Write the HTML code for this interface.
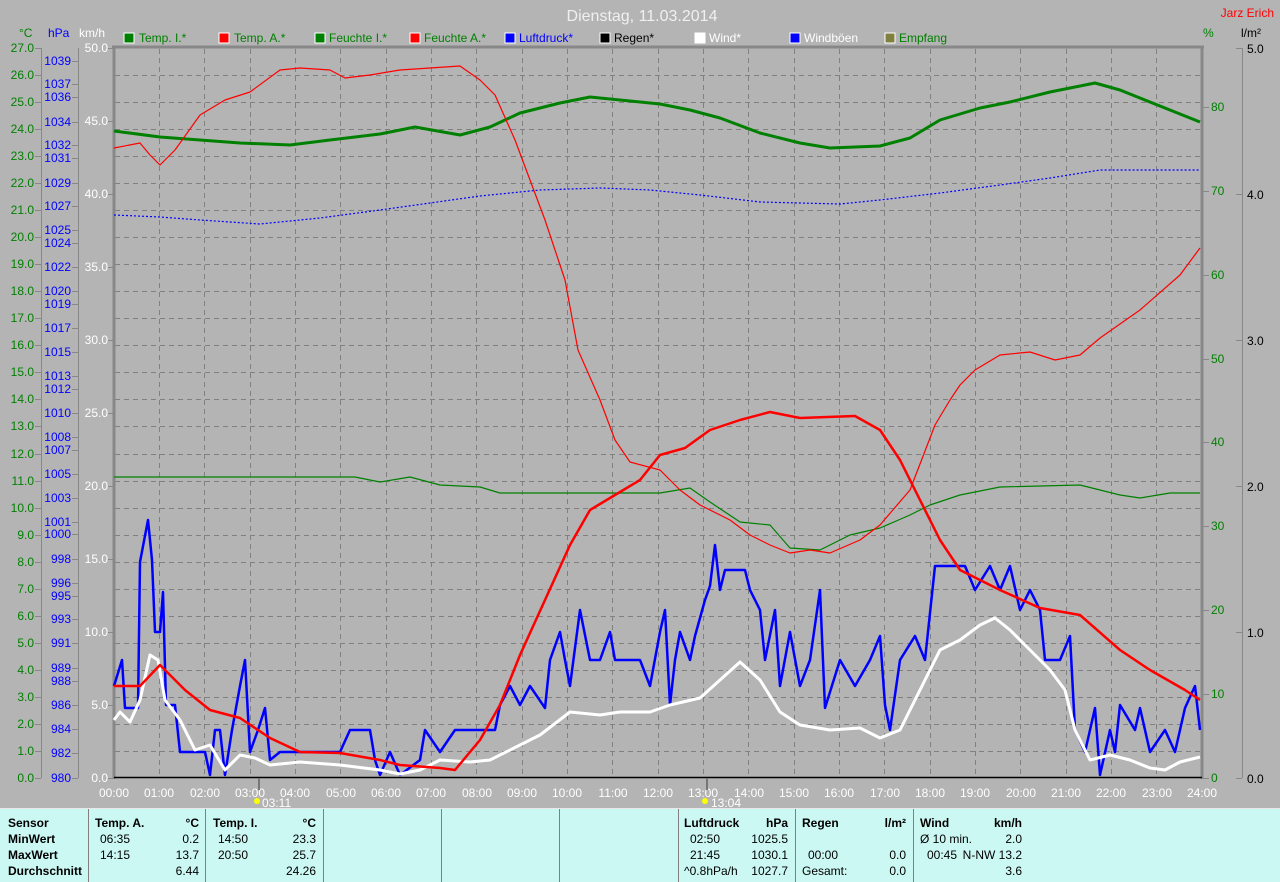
<!DOCTYPE html>
<html><head><meta charset="utf-8"><style>
html,body{margin:0;padding:0;background:#b4b4b4;}
body{width:1280px;height:881px;overflow:hidden;position:relative;font-family:"Liberation Sans",sans-serif;}
svg{position:absolute;left:0;top:0}
.tbl{position:absolute;left:0;top:808px;width:1280px;height:73px;background:#ccf8f4;border-top:1px solid #e8e8e8;font-size:12px;color:#000}
.tbl div{position:absolute;white-space:nowrap}
.b{font-weight:bold}
.sep{position:absolute;top:0;width:1px;height:73px;background:#808080}
</style></head><body>
<svg width="1280" height="808" xmlns="http://www.w3.org/2000/svg" font-family="Liberation Sans, sans-serif">
<text x="642" y="21" fill="#f0f0f0" font-size="16" text-anchor="middle">Dienstag, 11.03.2014</text>
<text x="1274" y="17" fill="#ff0000" font-size="12" text-anchor="end">Jarz Erich</text>
<g font-size="12">
<text x="19" y="37" fill="#008000">°C</text>
<text x="48" y="37" fill="#0000ff">hPa</text>
<text x="79" y="37" fill="#fff">km/h</text>
<text x="1203" y="37" fill="#008000">%</text>
<text x="1241" y="37" fill="#000">l/m²</text>
</g>
<g font-size="12">
<rect x="124" y="33" width="10" height="10" fill="#008000" stroke="#fff"/><text x="139" y="42" fill="#008000">Temp. I.*</text>
<rect x="219" y="33" width="10" height="10" fill="#ff0000" stroke="#fff"/><text x="234" y="42" fill="#008000">Temp. A.*</text>
<rect x="315" y="33" width="10" height="10" fill="#008000" stroke="#fff"/><text x="329" y="42" fill="#008000">Feuchte I.*</text>
<rect x="410" y="33" width="10" height="10" fill="#ff0000" stroke="#fff"/><text x="424" y="42" fill="#008000">Feuchte A.*</text>
<rect x="505" y="33" width="10" height="10" fill="#0000ff" stroke="#fff"/><text x="519" y="42" fill="#0000ff">Luftdruck*</text>
<rect x="600" y="33" width="10" height="10" fill="#000" stroke="#fff"/><text x="614" y="42" fill="#000">Regen*</text>
<rect x="695" y="33" width="10" height="10" fill="#fff" stroke="#fff"/><text x="709" y="42" fill="#fff">Wind*</text>
<rect x="790" y="33" width="10" height="10" fill="#0000ff" stroke="#fff"/><text x="804" y="42" fill="#fff">Windböen</text>
<rect x="885" y="33" width="10" height="10" fill="#808040" stroke="#fff"/><text x="899" y="42" fill="#008000">Empfang</text>
</g>
<line x1="112" y1="47" x2="1204" y2="47" stroke="#888" stroke-width="3"/>
<path stroke="#808080" stroke-width="1" stroke-dasharray="5,4" fill="none" d="M115 751.5H1200M115 724.5H1200M115 697.5H1200M115 670.5H1200M115 643.5H1200M115 616.5H1200M115 589.5H1200M115 562.5H1200M115 535.5H1200M115 508.5H1200M115 481.5H1200M115 454.5H1200M115 426.5H1200M115 399.5H1200M115 372.5H1200M115 345.5H1200M115 318.5H1200M115 291.5H1200M115 264.5H1200M115 237.5H1200M115 210.5H1200M115 183.5H1200M115 156.5H1200M115 129.5H1200M115 102.5H1200M115 75.5H1200
M159.5 49V777M204.5 49V777M250.5 49V777M295.5 49V777M340.5 49V777M386.5 49V777M431.5 49V777M476.5 49V777M522.5 49V777M567.5 49V777M612.5 49V777M658.5 49V777M703.5 49V777M748.5 49V777M794.5 49V777M839.5 49V777M884.5 49V777M930.5 49V777M975.5 49V777M1020.5 49V777M1066.5 49V777M1111.5 49V777M1156.5 49V777"/>
<line x1="114" y1="46" x2="114" y2="779" stroke="#888" stroke-width="3"/>
<line x1="1202" y1="46" x2="1202" y2="779" stroke="#888" stroke-width="3"/>
<line x1="114" y1="777.5" x2="1202" y2="777.5" stroke="#000" stroke-width="1.5"/>
<line x1="41.5" y1="48" x2="41.5" y2="778" stroke="#888"/>
<line x1="78.5" y1="48" x2="78.5" y2="778" stroke="#888"/>
<line x1="1242.5" y1="48" x2="1242.5" y2="778" stroke="#888"/>
<path stroke="#888" fill="none" d="M35 778.5h6M35 751.5h6M35 724.5h6M35 697.5h6M35 670.5h6M35 643.5h6M35 616.5h6M35 589.5h6M35 562.5h6M35 535.5h6M35 508.5h6M35 481.5h6M35 454.5h6M35 426.5h6M35 399.5h6M35 372.5h6M35 345.5h6M35 318.5h6M35 291.5h6M35 264.5h6M35 237.5h6M35 210.5h6M35 183.5h6M35 156.5h6M35 129.5h6M35 102.5h6M35 75.5h6M35 48.5h6
M72 61.5h6M72 84.5h6M72 97.5h6M72 122.5h6M72 145.5h6M72 158.5h6M72 183.5h6M72 206.5h6M72 230.5h6M72 243.5h6M72 267.5h6M72 291.5h6M72 304.5h6M72 328.5h6M72 352.5h6M72 376.5h6M72 389.5h6M72 413.5h6M72 437.5h6M72 450.5h6M72 474.5h6M72 498.5h6M72 522.5h6M72 534.5h6M72 559.5h6M72 583.5h6M72 596.5h6M72 619.5h6M72 643.5h6M72 668.5h6M72 681.5h6M72 705.5h6M72 729.5h6M72 753.5h6M72 778.5h6
M108 778.5h6M108 705.5h6M108 632.5h6M108 559.5h6M108 486.5h6M108 413.5h6M108 340.5h6M108 267.5h6M108 194.5h6M108 121.5h6M108 48.5h6
M1203 778.5h6M1203 694.5h6M1203 610.5h6M1203 526.5h6M1203 442.5h6M1203 359.5h6M1203 275.5h6M1203 191.5h6M1203 107.5h6
M1236 778.5h6M1236 632.5h6M1236 486.5h6M1236 340.5h6M1236 194.5h6M1236 48.5h6"/>
<g font-size="12" fill="#008000" text-anchor="end">
<text x="34" y="782">0.0</text><text x="34" y="755">1.0</text><text x="34" y="728">2.0</text><text x="34" y="701">3.0</text><text x="34" y="674">4.0</text><text x="34" y="647">5.0</text><text x="34" y="620">6.0</text><text x="34" y="593">7.0</text><text x="34" y="566">8.0</text><text x="34" y="539">9.0</text><text x="34" y="512">10.0</text><text x="34" y="485">11.0</text><text x="34" y="458">12.0</text><text x="34" y="430">13.0</text><text x="34" y="403">14.0</text><text x="34" y="376">15.0</text><text x="34" y="349">16.0</text><text x="34" y="322">17.0</text><text x="34" y="295">18.0</text><text x="34" y="268">19.0</text><text x="34" y="241">20.0</text><text x="34" y="214">21.0</text><text x="34" y="187">22.0</text><text x="34" y="160">23.0</text><text x="34" y="133">24.0</text><text x="34" y="106">25.0</text><text x="34" y="79">26.0</text><text x="34" y="52">27.0</text>
</g>
<g font-size="12" fill="#0000ff" text-anchor="end">
<text x="71" y="65">1039</text><text x="71" y="88">1037</text><text x="71" y="101">1036</text><text x="71" y="126">1034</text><text x="71" y="149">1032</text><text x="71" y="162">1031</text><text x="71" y="187">1029</text><text x="71" y="210">1027</text><text x="71" y="234">1025</text><text x="71" y="247">1024</text><text x="71" y="271">1022</text><text x="71" y="295">1020</text><text x="71" y="308">1019</text><text x="71" y="332">1017</text><text x="71" y="356">1015</text><text x="71" y="380">1013</text><text x="71" y="393">1012</text><text x="71" y="417">1010</text><text x="71" y="441">1008</text><text x="71" y="454">1007</text><text x="71" y="478">1005</text><text x="71" y="502">1003</text><text x="71" y="526">1001</text><text x="71" y="538">1000</text><text x="71" y="563">998</text><text x="71" y="587">996</text><text x="71" y="600">995</text><text x="71" y="623">993</text><text x="71" y="647">991</text><text x="71" y="672">989</text><text x="71" y="685">988</text><text x="71" y="709">986</text><text x="71" y="733">984</text><text x="71" y="757">982</text><text x="71" y="782">980</text>
</g>
<g font-size="12" fill="#fff" text-anchor="end">
<text x="108" y="782">0.0</text><text x="108" y="709">5.0</text><text x="108" y="636">10.0</text><text x="108" y="563">15.0</text><text x="108" y="490">20.0</text><text x="108" y="417">25.0</text><text x="108" y="344">30.0</text><text x="108" y="271">35.0</text><text x="108" y="198">40.0</text><text x="108" y="125">45.0</text><text x="108" y="52">50.0</text>
</g>
<g font-size="12" fill="#008000">
<text x="1211" y="782">0</text><text x="1211" y="698">10</text><text x="1211" y="614">20</text><text x="1211" y="530">30</text><text x="1211" y="446">40</text><text x="1211" y="363">50</text><text x="1211" y="279">60</text><text x="1211" y="195">70</text><text x="1211" y="111">80</text>
</g>
<g font-size="12" fill="#000">
<text x="1247" y="783">0.0</text><text x="1247" y="637">1.0</text><text x="1247" y="491">2.0</text><text x="1247" y="345">3.0</text><text x="1247" y="199">4.0</text><text x="1247" y="53">5.0</text>
</g>
<g font-size="12" fill="#fff" text-anchor="middle">
<text x="114" y="797">00:00</text><text x="159" y="797">01:00</text><text x="205" y="797">02:00</text><text x="250" y="797">03:00</text><text x="295" y="797">04:00</text><text x="341" y="797">05:00</text><text x="386" y="797">06:00</text><text x="431" y="797">07:00</text><text x="477" y="797">08:00</text><text x="522" y="797">09:00</text><text x="567" y="797">10:00</text><text x="613" y="797">11:00</text><text x="658" y="797">12:00</text><text x="703" y="797">13:00</text><text x="749" y="797">14:00</text><text x="794" y="797">15:00</text><text x="839" y="797">16:00</text><text x="885" y="797">17:00</text><text x="930" y="797">18:00</text><text x="975" y="797">19:00</text><text x="1021" y="797">20:00</text><text x="1066" y="797">21:00</text><text x="1111" y="797">22:00</text><text x="1157" y="797">23:00</text><text x="1202" y="797">24:00</text>
</g>
<line x1="259" y1="778" x2="259" y2="790" stroke="#777" stroke-width="2"/>
<text x="262" y="807" fill="#fff" font-size="12">03:11</text>
<circle cx="257" cy="801" r="3" fill="#ff0"/>
<line x1="707" y1="778" x2="707" y2="790" stroke="#777" stroke-width="2"/>
<text x="711" y="807" fill="#fff" font-size="12">13:04</text>
<circle cx="705" cy="801" r="3" fill="#ff0"/>
<g fill="none" stroke-linejoin="round">
<polyline stroke="#0000ff" stroke-width="1.2" stroke-dasharray="2,2" points="114,215 160,217 200,220 260,224 320,218 380,210 430,203 480,196 540,190 600,188 650,190 700,195 760,202 840,204 880,200 940,193 1000,185 1050,178 1100,170 1200,170"/>
<polyline stroke="#008000" stroke-width="1.2" points="114,477 355,477 380,482 410,477 440,485 480,487 500,493 660,493 690,488 710,502 740,522 770,525 790,548 820,550 850,535 880,528 910,515 930,505 960,495 1000,487 1080,485 1120,495 1140,498 1170,493 1200,493"/>
<polyline stroke="#008000" stroke-width="3" points="114,131 160,137 200,140 240,143 290,145 330,140 380,134 415,127 460,135 490,127 520,113 560,103 590,97 620,100 660,104 690,110 720,118 760,133 800,143 830,148 880,146 910,138 940,120 980,108 1010,102 1050,92 1095,83 1120,90 1170,110 1200,122"/>
<polyline stroke="#ff0000" stroke-width="1.2" points="114,148 140,143 150,155 160,165 175,150 200,115 225,100 250,92 280,70 300,68 330,70 345,78 370,75 400,70 430,68 460,66 480,80 495,95 515,140 530,180 545,220 565,280 578,350 600,400 615,440 630,462 660,470 680,490 700,505 730,520 750,535 770,545 790,553 810,550 830,553 860,540 880,525 910,490 935,425 950,400 960,385 975,370 1000,355 1030,352 1055,360 1080,355 1100,338 1140,310 1180,275 1200,248"/>
<polyline stroke="#0000ff" stroke-width="2.5" points="114,686 122,660 125,708 138,708 140,562 148,520 152,560 155,632 160,632 163,592 166,705 175,705 180,752 205,752 210,775 215,730 220,730 225,775 232,730 240,686 245,660 250,752 258,730 265,708 270,760 280,752 340,752 350,730 370,730 375,760 380,775 390,752 400,775 420,760 425,730 440,752 455,730 495,730 500,705 510,686 520,705 530,686 545,708 550,660 560,632 565,660 570,686 580,610 590,660 600,660 610,632 615,660 640,660 650,686 660,632 665,610 670,705 675,660 680,632 690,660 695,636 705,600 710,586 715,545 720,590 725,570 735,570 745,570 750,590 760,610 765,660 775,610 780,686 790,632 800,686 810,660 820,590 825,708 840,660 855,686 870,660 880,636 885,705 890,730 900,660 915,636 925,660 935,566 965,566 975,590 990,566 1000,590 1010,566 1020,610 1030,590 1040,610 1045,660 1060,660 1070,636 1075,730 1085,752 1095,708 1100,775 1110,730 1115,752 1120,705 1135,730 1140,708 1150,752 1165,730 1175,752 1185,708 1195,686 1200,730"/>
<polyline stroke="#ffffff" stroke-width="3" points="114,720 120,712 130,722 140,700 150,655 158,660 165,700 180,720 195,750 210,745 225,770 240,755 255,758 270,765 300,762 340,765 380,770 400,774 420,770 440,760 470,762 490,760 520,745 540,735 570,712 600,715 620,712 650,712 670,705 700,698 720,680 740,662 760,680 780,712 800,725 830,730 860,728 880,738 900,730 920,690 940,650 960,640 980,625 995,618 1010,630 1030,650 1050,670 1065,690 1075,730 1090,760 1110,755 1130,760 1150,768 1165,770 1180,762 1200,757"/>
<polyline stroke="#ff0000" stroke-width="2.5" points="114,686 140,686 160,665 185,690 210,710 240,718 270,738 300,752 340,753 380,760 400,765 440,768 455,770 480,740 500,705 520,655 545,600 570,545 590,510 615,495 640,480 660,455 685,448 710,430 740,420 770,412 800,418 855,416 880,430 900,460 920,500 940,540 960,570 1000,590 1040,608 1080,615 1120,650 1150,670 1185,690 1200,700"/>
</g>
</svg>
<div class="tbl">
<div class="sep" style="left:88px"></div><div class="sep" style="left:205px"></div><div class="sep" style="left:323px"></div><div class="sep" style="left:441px"></div><div class="sep" style="left:559px"></div><div class="sep" style="left:678px"></div><div class="sep" style="left:795px"></div><div class="sep" style="left:913px"></div>
<div class="b" style="left:8px;top:7px">Sensor</div>
<div class="b" style="left:8px;top:23px">MinWert</div>
<div class="b" style="left:8px;top:39px">MaxWert</div>
<div class="b" style="left:8px;top:55px">Durchschnitt</div>
<div class="b" style="left:95px;top:7px">Temp. A.</div><div class="b" style="right:1081px;top:7px">°C</div>
<div style="left:100px;top:23px">06:35</div><div style="right:1081px;top:23px">0.2</div>
<div style="left:100px;top:39px">14:15</div><div style="right:1081px;top:39px">13.7</div>
<div style="right:1081px;top:55px">6.44</div>
<div class="b" style="left:213px;top:7px">Temp. I.</div><div class="b" style="right:964px;top:7px">°C</div>
<div style="left:218px;top:23px">14:50</div><div style="right:964px;top:23px">23.3</div>
<div style="left:218px;top:39px">20:50</div><div style="right:964px;top:39px">25.7</div>
<div style="right:964px;top:55px">24.26</div>
<div class="b" style="left:684px;top:7px">Luftdruck</div><div class="b" style="right:492px;top:7px">hPa</div>
<div style="left:690px;top:23px">02:50</div><div style="right:492px;top:23px">1025.5</div>
<div style="left:690px;top:39px">21:45</div><div style="right:492px;top:39px">1030.1</div>
<div style="left:684px;top:55px">^0.8hPa/h</div><div style="right:492px;top:55px">1027.7</div>
<div class="b" style="left:802px;top:7px">Regen</div><div class="b" style="right:374px;top:7px">l/m²</div>
<div style="left:808px;top:39px">00:00</div><div style="right:374px;top:39px">0.0</div>
<div style="left:802px;top:55px">Gesamt:</div><div style="right:374px;top:55px">0.0</div>
<div class="b" style="left:920px;top:7px">Wind</div><div class="b" style="right:258px;top:7px">km/h</div>
<div style="left:920px;top:23px">Ø 10 min.</div><div style="right:258px;top:23px">2.0</div>
<div style="left:927px;top:39px">00:45</div><div style="right:258px;top:39px">N-NW 13.2</div>
<div style="right:258px;top:55px">3.6</div>
</div>
</body></html>
